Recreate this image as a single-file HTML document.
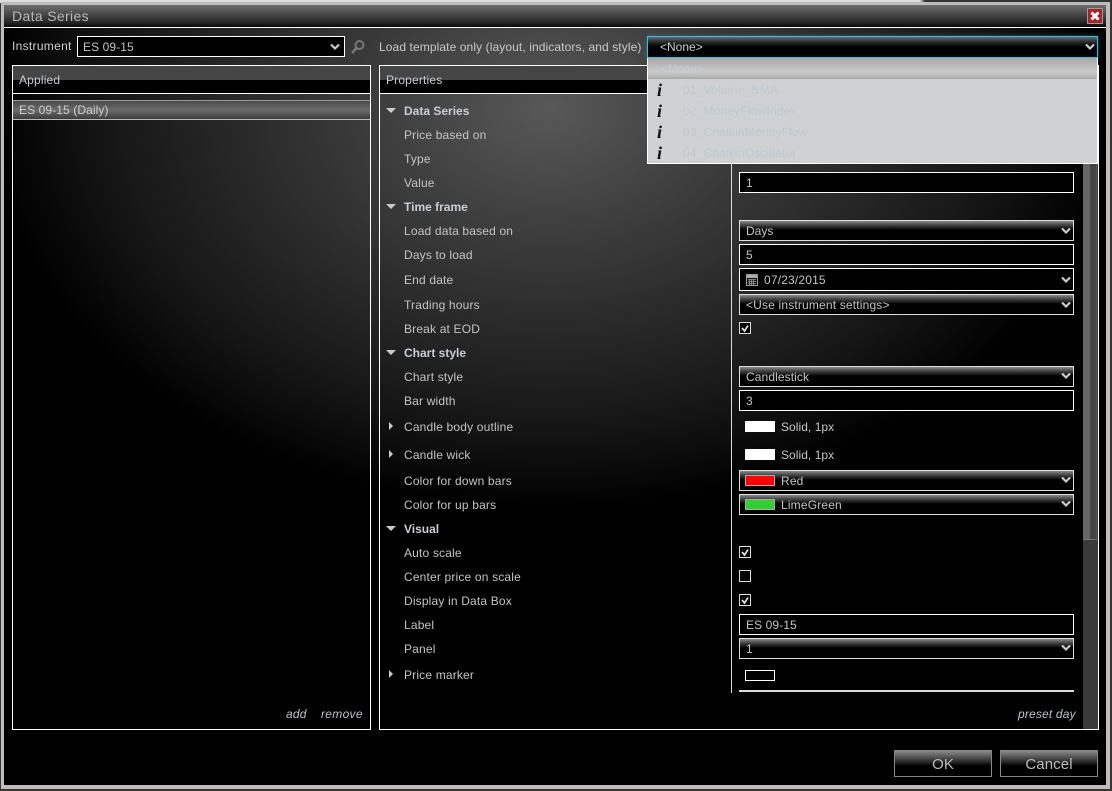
<!DOCTYPE html>
<html><head><meta charset="utf-8"><title>Data Series</title>
<style>
html,body{margin:0;padding:0;width:1112px;height:791px;overflow:hidden;background:#3b352f}
body{position:relative;font:12px "Liberation Sans",sans-serif;color:#c4c4c4;letter-spacing:.17px}
div,svg{position:absolute;box-sizing:border-box}
.t{white-space:nowrap;line-height:14px;height:14px}
.l{left:404px}
.h{left:404px;font-weight:bold;color:#c9ced4;letter-spacing:0}
.b{background:#000;border:1px solid #fff;left:739px;width:335px;height:21px;padding:3px 0 0 6px;line-height:14px;white-space:nowrap}
.s{background:linear-gradient(#8a8a8a 0,#444 4px,#000 9px,#000 100%);border-color:#ddd}
.c{left:739px;width:12px;height:12px;border:1px solid #ddd;background:#000}
.sw{left:745px;width:30px;height:11px;background:#fff}
.ar{left:386px;width:0;height:0;border-left:5px solid transparent;border-right:5px solid transparent;border-top:5px solid #ccc}
.ar2{left:389px;width:0;height:0;border-top:4px solid transparent;border-bottom:4px solid transparent;border-left:4px solid #ccc}
.ic{font:italic bold 18px "Liberation Serif",serif;color:#111;left:657px;line-height:20px;letter-spacing:0}
.dd{left:683px;color:#bccad0;line-height:14px;white-space:nowrap}
.btn{top:750px;height:27px;width:98px;border:1px solid #888;background:linear-gradient(#888 0,#444 8px,#000 15px,#000 100%);text-align:center;font-size:15px;line-height:27px;color:#bcbcbc;letter-spacing:.1px}
</style></head><body>
<div style="left:0;top:0;width:1112px;height:3px;background:linear-gradient(90deg,#ddd 0,#ddd 920px,#333 925px,#333 100%)"></div>
<div style="left:1px;top:2px;width:1109px;height:787px;background:#bdbdbd"></div>
<div style="left:4px;top:5px;width:1102px;height:780px;background:#000;overflow:hidden">
 <div style="left:0;top:0;width:1102px;height:780px;background:radial-gradient(ellipse 560px 400px at 546px 105px,#585858 0,#3c3c3c 32%,#151515 80%,#000 100%)"></div>
 <div style="left:0;top:0;width:1102px;height:22px;background:linear-gradient(#6e6e6e,#2a2a2a 75%,#0a0a0a)"></div>
 <div style="left:0;top:22px;width:1102px;height:1px;background:#fff"></div>
</div>
<div class="t" style="left:12px;top:8px;font-size:14px;line-height:16px;height:16px;color:#b8b8b8;letter-spacing:.35px">Data Series</div>
<div style="left:1087px;top:8px;width:16px;height:16px;background:#a9232a;border:1px solid #999"></div>
<svg style="left:1087px;top:8px" width="16" height="16"><path d="M4.500 4.500 11.500 11.500M11.500 4.500 4.500 11.500" stroke="#fff" stroke-width="3"/></svg>

<div class="t" style="left:12px;top:39px;color:#d0d0d0;letter-spacing:.3px">Instrument</div>
<div class="b" style="left:77px;top:36px;width:268px;padding-left:5px;letter-spacing:.1px">ES 09-15</div>
<svg style="left:329px;top:43px" width="12" height="8"><path d="M2 1.500 6 5.500 10 1.500" fill="none" stroke="#ccc" stroke-width="2.200"/></svg>
<svg style="left:350px;top:39px" width="16" height="16"><circle cx="9.500" cy="6" r="4" fill="none" stroke="#777" stroke-width="2"/><path d="M6.500 9 2 14" stroke="#777" stroke-width="2.500"/></svg>
<div class="t" style="left:379px;top:40px;color:#c8c8c8;letter-spacing:.1px">Load template only (layout, indicators, and style)</div>

<!-- Applied panel -->
<div style="left:12px;top:65px;width:359px;height:665px;border:1px solid #fff;overflow:hidden">
 <div style="left:0;top:0;width:357px;height:27px;background:#000"></div>
 <div style="left:0;top:0;width:357px;height:14px;background:#454545"></div>
 <div style="left:0;top:27px;width:357px;height:1px;background:#fff"></div>
 <div style="left:0;top:34px;width:357px;height:20px;background:linear-gradient(#4a4a4a,#6c6c6c 50%,#3c3c3c);border-top:1px solid #999;border-bottom:1px solid #bbb"></div>
</div>
<div class="t" style="left:19px;top:73px;color:#c6ccd2">Applied</div>
<div class="t" style="left:19px;top:103px;color:#d0d0d0;letter-spacing:.1px">ES 09-15 (Daily)</div>
<div class="t" style="left:286px;top:707px;font-style:italic;color:#b9c4ce">add</div>
<div class="t" style="left:321px;top:707px;font-style:italic;color:#b9c4ce;letter-spacing:.3px">remove</div>

<!-- Properties panel -->
<div style="left:379px;top:65px;width:720px;height:665px;border:1px solid #fff;overflow:hidden">
 <div style="left:0;top:0;width:718px;height:27px;background:#000"></div>
 <div style="left:0;top:0;width:718px;height:14px;background:#454545"></div>
 <div style="left:0;top:27px;width:718px;height:1px;background:#fff"></div>
 <div style="left:351px;top:28px;width:1px;height:599px;background:#ddd"></div>
 <div style="left:703px;top:28px;width:15px;height:635px;background:#3a3a3a"></div>
 <div style="left:703px;top:28px;width:7px;height:446px;background:#666"></div>
 <div style="left:710px;top:28px;width:6px;height:446px;background:#444"></div>
 <div style="left:716px;top:28px;width:1px;height:446px;background:#555"></div>
 <div style="left:703px;top:473px;width:14px;height:1px;background:#777"></div>
</div>
<div class="t" style="left:386px;top:73px;color:#c6ccd2">Properties</div>

<div class="ar" style="top:108px"></div><div class="t h" style="top:104px">Data Series</div>
<div class="t l" style="top:128px">Price based on</div>
<div class="t l" style="top:152px">Type</div>
<div class="t l" style="top:176px">Value</div>
<div class="ar" style="top:204px"></div><div class="t h" style="top:200px">Time frame</div>
<div class="t l" style="top:224px">Load data based on</div>
<div class="t l" style="top:248px">Days to load</div>
<div class="t l" style="top:273px">End date</div>
<div class="t l" style="top:298px">Trading hours</div>
<div class="t l" style="top:322px">Break at EOD</div>
<div class="ar" style="top:350px"></div><div class="t h" style="top:346px">Chart style</div>
<div class="t l" style="top:370px">Chart style</div>
<div class="t l" style="top:394px">Bar width</div>
<div class="ar2" style="top:422px"></div><div class="t l" style="top:420px">Candle body outline</div>
<div class="ar2" style="top:450px"></div><div class="t l" style="top:448px">Candle wick</div>
<div class="t l" style="top:474px">Color for down bars</div>
<div class="t l" style="top:498px">Color for up bars</div>
<div class="ar" style="top:526px"></div><div class="t h" style="top:522px">Visual</div>
<div class="t l" style="top:546px">Auto scale</div>
<div class="t l" style="top:570px">Center price on scale</div>
<div class="t l" style="top:594px">Display in Data Box</div>
<div class="t l" style="top:618px">Label</div>
<div class="t l" style="top:642px">Panel</div>
<div class="ar2" style="top:670px"></div><div class="t l" style="top:668px">Price marker</div>

<div class="b" style="top:172px">1</div>
<div class="b s" style="top:220px;letter-spacing:0">Days</div>
<div class="b" style="top:244px">5</div>
<div class="b" style="top:268px;height:23px;padding:4px 0 0 24px">07/23/2015</div>
<svg style="left:746px;top:274px" width="12" height="12"><rect x=".5" y=".5" width="11" height="11" fill="#111" stroke="#999"/><rect x="1" y="1" width="10" height="3" fill="#aaa"/><path d="M2 5.500h8M2 7.500h8M2 9.500h8M3.500 5v6M5.500 5v6M7.500 5v6" stroke="#999" stroke-width=".8"/></svg>
<div class="b s" style="top:294px">&lt;Use instrument settings&gt;</div>
<div class="c" style="top:322px"></div>
<svg style="left:739px;top:322px" width="12" height="12"><path d="M3 6 5.500 9 9 3.500" fill="none" stroke="#ddd" stroke-width="1.800"/></svg>
<div class="b s" style="top:366px;letter-spacing:.1px">Candlestick</div>
<div class="b" style="top:390px">3</div>
<div class="sw" style="top:421px"></div><div class="t" style="left:781px;top:420px;letter-spacing:.05px">Solid, 1px</div>
<div class="sw" style="top:449px"></div><div class="t" style="left:781px;top:448px;letter-spacing:.05px">Solid, 1px</div>
<div class="b s" style="top:470px;padding-left:41px">Red</div>
<div class="sw" style="top:475px;background:#f00;border:1px solid #aaa"></div>
<div class="b s" style="top:494px;padding-left:41px">LimeGreen</div>
<div class="sw" style="top:499px;background:#32cd32;border:1px solid #aaa"></div>
<div class="c" style="top:546px"></div>
<svg style="left:739px;top:546px" width="12" height="12"><path d="M3 6 5.500 9 9 3.500" fill="none" stroke="#ddd" stroke-width="1.800"/></svg>
<div class="c" style="top:570px"></div>
<div class="c" style="top:594px"></div>
<svg style="left:739px;top:594px" width="12" height="12"><path d="M3 6 5.500 9 9 3.500" fill="none" stroke="#ddd" stroke-width="1.800"/></svg>
<div class="b" style="top:614px;letter-spacing:.1px">ES 09-15</div>
<div class="b s" style="top:638px">1</div>
<div class="sw" style="top:670px;background:#000;border:1px solid #fff"></div>
<div style="left:739px;top:690px;width:335px;height:2px;background:#ddd"></div>
<div class="t" style="left:1018px;top:707px;font-style:italic;color:#b9c4ce">preset day</div>

<svg style="left:1060px;top:227px" width="12" height="8"><path d="M2 1.500 6 5.500 10 1.500" fill="none" stroke="#ccc" stroke-width="2.200"/></svg>
<svg style="left:1060px;top:276px" width="12" height="8"><path d="M2 1.500 6 5.500 10 1.500" fill="none" stroke="#ccc" stroke-width="2.200"/></svg>
<svg style="left:1060px;top:301px" width="12" height="8"><path d="M2 1.500 6 5.500 10 1.500" fill="none" stroke="#ccc" stroke-width="2.200"/></svg>
<svg style="left:1060px;top:372px" width="12" height="8"><path d="M2 1.500 6 5.500 10 1.500" fill="none" stroke="#ccc" stroke-width="2.200"/></svg>
<svg style="left:1060px;top:476px" width="12" height="8"><path d="M2 1.500 6 5.500 10 1.500" fill="none" stroke="#ccc" stroke-width="2.200"/></svg>
<svg style="left:1060px;top:500px" width="12" height="8"><path d="M2 1.500 6 5.500 10 1.500" fill="none" stroke="#ccc" stroke-width="2.200"/></svg>
<svg style="left:1060px;top:644px" width="12" height="8"><path d="M2 1.500 6 5.500 10 1.500" fill="none" stroke="#ccc" stroke-width="2.200"/></svg>

<!-- Template select + dropdown -->
<div style="left:647px;top:36px;width:451px;height:22px;background:linear-gradient(#6a6a6a 0,#2a2a2a 5px,#000 10px);border:1px solid #2cc3e8;padding:2px 0 0 12px;line-height:16px;color:#ccc;letter-spacing:0;box-shadow:0 0 4px rgba(60,120,140,.7)">&lt;None&gt;</div>
<svg style="left:1084px;top:43px" width="12" height="8"><path d="M2 1.500 6 5.500 10 1.500" fill="none" stroke="#ccc" stroke-width="2.200"/></svg>
<div style="left:647px;top:58px;width:451px;height:106px;background:#d0d1d3;border:1px solid #fff;border-top:0"></div>
<div style="left:648px;top:58px;width:449px;height:21px;background:linear-gradient(#a8a8a8,#cbcbcb 70%,#b0b0b0);border-bottom:1px solid #aaa"></div>
<div class="t" style="left:661px;top:62px;color:#c9ced2;letter-spacing:0">&lt;None&gt;</div>
<div class="t ic" style="top:80px;height:20px">i</div><div class="dd" style="top:83px">01_Volume_SMA</div>
<div class="t ic" style="top:101px;height:20px">i</div><div class="dd" style="top:104px">02_MoneyFlowIndex</div>
<div class="t ic" style="top:122px;height:20px">i</div><div class="dd" style="top:125px">03_ChaikinMoneyFlow</div>
<div class="t ic" style="top:143px;height:20px">i</div><div class="dd" style="top:146px">04_ChaikinOscillator</div>

<div class="btn" style="left:894px">OK</div>
<div class="btn" style="left:1000px">Cancel</div>
</body></html>
